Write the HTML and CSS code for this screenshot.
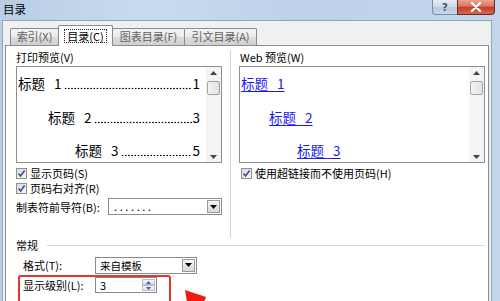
FILE: index.html
```html
<!DOCTYPE html>
<html lang="zh-CN">
<head>
<meta charset="utf-8">
<title>目录</title>
<link rel="stylesheet" href="styles.css">
</head>
<body>
<div class="win">
  <div class="titlebar">
    <span class="title">目录</span>
    <div class="caps">
      <div class="cap help">?</div>
      <div class="cap close">
        <svg width="12" height="10" viewBox="0 0 12 10"><path d="M2 1 L10 9 M10 1 L2 9" stroke="#fff" stroke-width="2.4" stroke-linecap="round"/></svg>
      </div>
    </div>
  </div>
  <div class="client">
    <div class="tabs">
      <div class="tab t1">索引(X)</div>
      <div class="tab sel"><span class="focus">目录(C)</span></div>
      <div class="tab t3">图表目录(F)</div>
      <div class="tab t4">引文目录(A)</div>
    </div>
    <div class="panel">
      <div class="cols">
        <div class="col">
          <div class="label">打印预览(V)</div>
          <div class="preview">
            <div class="pv">
              <div class="pl i0"><span class="h">标题 1</span><span class="lead"></span><span class="pg">1</span></div>
              <div class="pl i1"><span class="h">标题 2</span><span class="lead"></span><span class="pg">3</span></div>
              <div class="pl i2"><span class="h">标题 3</span><span class="lead"></span><span class="pg">5</span></div>
            </div>
            <div class="scroll">
              <svg class="arr" width="7" height="4" viewBox="0 0 7 4"><path d="M0 4 L3.5 0 L7 4Z" fill="#444"/></svg>
              <div class="thumb"></div>
              <div class="track"></div>
              <svg class="arr" width="7" height="4" viewBox="0 0 7 4"><path d="M0 0 L3.5 4 L7 0Z" fill="#444"/></svg>
            </div>
          </div>
          <div class="chk"><span class="box"><svg width="9" height="9" viewBox="0 0 9 9"><path d="M1.5 4.5 L3.6 7 L7.6 1.5" stroke="#3b4f8a" stroke-width="1.6" fill="none"/></svg></span>显示页码(S)</div>
          <div class="chk"><span class="box"><svg width="9" height="9" viewBox="0 0 9 9"><path d="M1.5 4.5 L3.6 7 L7.6 1.5" stroke="#3b4f8a" stroke-width="1.6" fill="none"/></svg></span>页码右对齐(R)</div>
          <div class="lrow">
            <span class="lbl">制表符前导符(B):</span>
            <div class="combo lead-combo"><span class="val dots">.......</span><span class="dd"><svg width="7" height="4" viewBox="0 0 7 4"><path d="M0 0 L3.5 4 L7 0Z" fill="#000"/></svg></span></div>
          </div>
        </div>
        <div class="sep"></div>
        <div class="col rcol">
          <div class="label">Web 预览(W)</div>
          <div class="preview">
            <div class="pv web">
              <div class="wl i0"><span class="link">标题 1</span></div>
              <div class="wl i1"><span class="link">标题 2</span></div>
              <div class="wl i2"><span class="link">标题 3</span></div>
            </div>
            <div class="scroll">
              <svg class="arr" width="7" height="4" viewBox="0 0 7 4"><path d="M0 4 L3.5 0 L7 4Z" fill="#444"/></svg>
              <div class="thumb"></div>
              <div class="track"></div>
              <svg class="arr" width="7" height="4" viewBox="0 0 7 4"><path d="M0 0 L3.5 4 L7 0Z" fill="#444"/></svg>
            </div>
          </div>
          <div class="chk rchk"><span class="box"><svg width="9" height="9" viewBox="0 0 9 9"><path d="M1.5 4.5 L3.6 7 L7.6 1.5" stroke="#3b4f8a" stroke-width="1.6" fill="none"/></svg></span>使用超链接而不使用页码(H)</div>
        </div>
      </div>
      <div class="ghead">常规</div>
      <div class="frow r1">
        <span class="flbl">格式(T):</span>
        <div class="combo fmt"><span class="val">来自模板</span><span class="dd"><svg width="7" height="4" viewBox="0 0 7 4"><path d="M0 0 L3.5 4 L7 0Z" fill="#000"/></svg></span></div>
      </div>
      <div class="frow r2">
        <span class="flbl">显示级别(L):</span>
        <div class="spin"><span class="val">3</span>
          <span class="sb">
            <span class="sbb"><svg width="5" height="3" viewBox="0 0 5 3"><path d="M0 3 L2.5 0 L5 3Z" fill="#4d6185"/></svg></span>
            <span class="sbb"><svg width="5" height="3" viewBox="0 0 5 3"><path d="M0 0 L2.5 3 L5 0Z" fill="#4d6185"/></svg></span>
          </span>
        </div>
      </div>
    </div>
  </div>
  <div class="annot-box"></div>
  <svg class="annot-arrow" width="40" height="21" viewBox="0 0 40 21"><polygon points="5,9 26,16 24,21 7,21" fill="#f01b10"/></svg>
</div>
</body>
</html>
```

FILE: styles.css
```css
* { box-sizing: border-box; }
html, body { margin: 0; padding: 0; }
body {
  width: 500px;
  height: 301px;
  overflow: hidden;
  font-family: "Noto Sans CJK SC", "Noto Sans", sans-serif;
  font-size: 11px;
  color: #000;
  background: #bfd3ea;
}
.win {
  width: 500px;
  height: 301px;
  position: relative;
  display: flex;
  flex-direction: column;
  overflow: hidden;
  background: linear-gradient(to right, #b9cde5 0%, #c9dbef 30%, #bdd1e9 60%, #c3d6ec 100%);
}
.titlebar {
  height: 20px;
  flex: none;
  display: flex;
  justify-content: space-between;
  align-items: flex-start;
  padding: 0 5px 0 3px;
}
.title {
  font-size: 11.5px;
  line-height: 18px;
}
.caps { display: flex; }
.cap {
  height: 15px;
  display: flex;
  align-items: center;
  justify-content: center;
}
.help {
  width: 25px;
  border: 1px solid #7a8aa0;
  border-top: none;
  border-right: none;
  border-radius: 0 0 0 4px;
  background: linear-gradient(#e3ebf5, #cdd9e8 50%, #b9c9dc 51%, #c8d7e8);
  color: #4a5566;
  font-family: "DejaVu Sans", sans-serif;
  font-weight: bold;
  font-size: 10px;
  line-height: 13px;
}
.close {
  width: 38px;
  border: 1px solid #6a2a22;
  border-top: none;
  border-radius: 0 0 4px 0;
  background: linear-gradient(#e8a396, #d87562 45%, #c43e27 52%, #d8674a);
}
.client {
  flex: 1;
  display: flex;
  flex-direction: column;
  margin: 0 8px 0 2px;
  background: #f0f0f0;
  border: 1px solid #93a6bf;
  border-bottom: none;
  padding: 4px 2px 0 2px;
  min-height: 0;
}
.tabs {
  display: flex;
  align-items: flex-end;
  padding-left: 5px;
  height: 20px;
  flex: none;
  position: relative;
  z-index: 2;
}
.tab {
  height: 17px;
  border: 1px solid #898c95;
  border-bottom: none;
  border-radius: 2px 2px 0 0;
  background: linear-gradient(#f3f3f3, #ebebeb 50%, #dddddd 51%, #cfcfcf);
  color: #606060;
  line-height: 15px;
  text-align: center;
  margin-left: -1px;
}
.t1 { width: 49px; margin-left: 0; }
.t3 { width: 73px; }
.t4 { width: 73px; }
.tab.sel {
  width: 55px;
  height: 21px;
  margin-bottom: -1px;
  background: #fff;
  color: #000;
  position: relative;
  z-index: 3;
  padding-top: 3px;
  line-height: 13px;
}
.focus {
  display: inline-block;
  border: 1px dotted #222;
  padding: 0 2px;
  line-height: 12px;
}
.panel {
  flex: 1;
  background: #fff;
  border: 1px solid #898c95;
  border-bottom: none;
  padding: 4px 3px 0 10px;
  position: relative;
  z-index: 1;
  min-height: 0;
}
.cols {
  display: grid;
  grid-template-columns: 206px 1px 246px;
  column-gap: 8px;
  height: 188px;
}
.col { display: flex; flex-direction: column; }
.sep { background: #d2d2d2; }
.label {
  height: 14px;
  line-height: 14px;
  white-space: nowrap;
}
.rcol .label { padding-left: 1px; }
.preview {
  margin-top: 2px;
  height: 97px;
  border: 1px solid #8e8f8f;
  display: flex;
  background: #fff;
}
.pv {
  flex: 1;
  min-width: 0;
  padding: 6px 6px 0 1px;
  font-size: 13.5px;
}
.pl, .wl {
  height: 20px;
  line-height: 20px;
  display: flex;
  white-space: nowrap;
  word-spacing: 6px;
}
.pl + .pl, .wl + .wl { margin-top: 14px; }
.pl.i2, .wl.i2 { margin-top: 13px; }
.pl.i1 { padding-left: 30px; }
.pl.i2 { padding-left: 57px; }
.wl.i1 { padding-left: 28px; }
.wl.i2 { padding-left: 56px; }
.pl .h { flex: none; }
.pl .lead {
  flex: 1;
  min-width: 0;
  height: 20px;
  margin: 0 1px 0 2px;
  background-image: radial-gradient(circle, #000 0.75px, transparent 1.1px);
  background-size: 3.2px 3px;
  background-repeat: repeat-x;
  background-position: left 14px;
}
.pl .pg { flex: none; }
.web { padding-left: 1px; }
.link {
  color: #1b1bf0;
  text-decoration: underline;
  text-underline-offset: 2px;
}
.scroll {
  width: 15px;
  flex: none;
  background: #f4f4f4;
  display: flex;
  flex-direction: column;
  align-items: center;
  padding: 4px 0 3px;
}
.scroll .arr { flex: none; }
.thumb {
  margin-top: 6px;
  width: 13px;
  height: 14px;
  border: 1px solid #a3a3a3;
  border-radius: 2px;
  background: linear-gradient(to right, #f4f4f4, #e2e2e2);
}
.track { flex: 1; }
.chk {
  height: 15px;
  line-height: 15px;
  display: flex;
  align-items: center;
  white-space: nowrap;
}
.col .preview + .chk { margin-top: 3px; }
.box {
  width: 11px;
  height: 11px;
  border: 1px solid #8f8f8f;
  background: linear-gradient(135deg, #dcdcdc, #f7f7f7);
  margin-right: 3px;
  display: flex;
  align-items: center;
  justify-content: center;
  flex: none;
}
.rchk { padding-left: 2px; }
.lrow {
  margin-top: 2px;
  display: flex;
  align-items: center;
  height: 17px;
}
.lbl { width: 92px; white-space: nowrap; }
.combo {
  height: 17px;
  border: 1px solid #8a8a8a;
  background: #fff;
  display: flex;
  align-items: center;
  justify-content: space-between;
  padding: 1px;
}
.lead-combo { width: 114px; }
.val { padding-left: 3px; line-height: 13px; }
.dots { letter-spacing: 2.6px; font-size: 11px; padding-left: 4px; }
.dd {
  width: 13px;
  height: 13px;
  border: 1px solid #9a9a9a;
  background: linear-gradient(#f5f5f5, #d9d9d9);
  display: flex;
  align-items: center;
  justify-content: center;
}
.ghead {
  height: 14px;
  line-height: 14px;
  display: flex;
  align-items: center;
}
.ghead::after {
  content: "";
  flex: 1;
  height: 1px;
  background: #d9d9d9;
  margin-left: 9px;
}
.frow {
  display: flex;
  align-items: center;
  padding-left: 7px;
}
.r1 { margin-top: 4px; height: 18px; }
.r2 { margin-top: 3px; height: 16px; }
.flbl { width: 72px; white-space: nowrap; }
.fmt { width: 102px; }
.fmt .val { font-size: 10.5px; }
.spin {
  width: 62px;
  height: 16px;
  border: 1px solid #8a8a8a;
  display: flex;
  justify-content: space-between;
  align-items: center;
  padding: 1px;
}
.sb { display: flex; flex-direction: column; width: 13px; height: 12px; }
.sbb {
  flex: 1;
  border: 1px solid #b5c0d0;
  background: linear-gradient(#f2f5fa, #dde4ee);
  display: flex;
  align-items: center;
  justify-content: center;
}
.annot-box {
  position: absolute;
  left: 18px;
  top: 275px;
  width: 153px;
  height: 40px;
  border: 2.5px solid #e8342c;
  border-radius: 3px;
  z-index: 5;
}
.annot-arrow {
  position: absolute;
  left: 180px;
  top: 281px;
  z-index: 5;
}
```
